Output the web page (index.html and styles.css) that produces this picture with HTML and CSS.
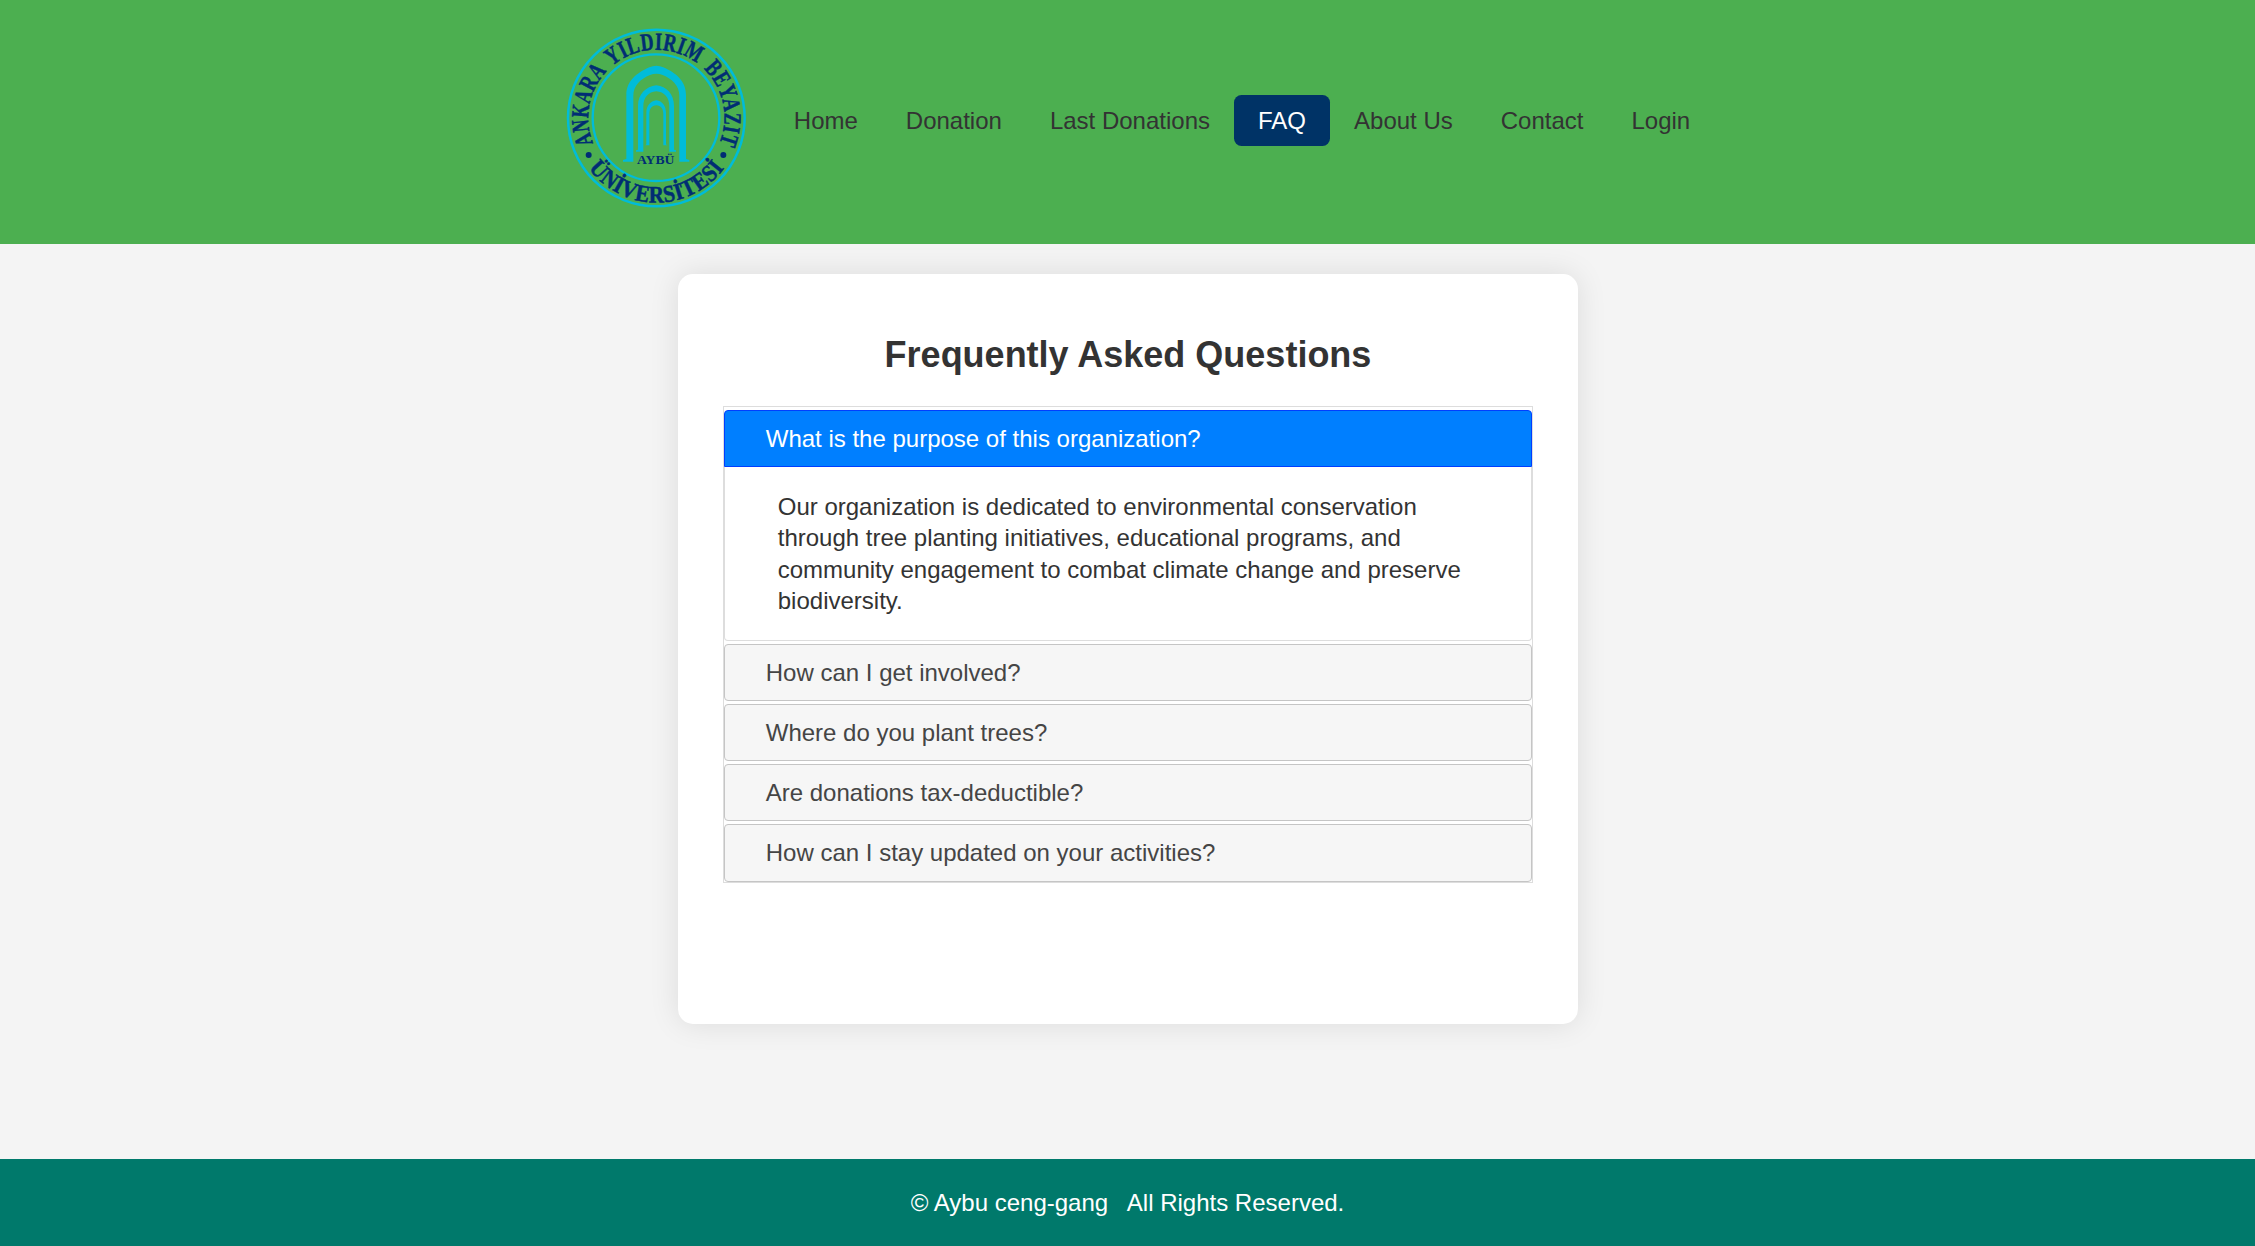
FILE: index.html
```html
<!DOCTYPE html>
<html lang="en">
<head>
<meta charset="utf-8">
<title>FAQ</title>
<link rel="stylesheet" href="styles.css">
</head>
<body>
<header class="site-header">
  <svg class="logo" viewBox="-27 0 687 660" role="img" aria-label="Ankara Yıldırım Beyazıt Üniversitesi">
    <defs>
      <path id="arc-top" d="M130 400A204 204 0 1 1 508 400"/>
      <path id="arc-bottom" d="M116 475A252 252 0 0 0 522 475"/>
    </defs>
    <g fill="none" stroke="#00bcd9">
      <circle cx="319" cy="324" r="265" stroke-width="7.5"/>
      <circle cx="318" cy="323" r="190" stroke-width="7"/>
    </g>
    <g fill="#00bcd9">
      <path d="M219 455V450L229 447V255C229 212 262 188 298 172Q319 162 340 172C376 188 408 212 408 255V447L418 450V455H388V258C388 226 366 207 338 195Q319 187 300 195C272 207 250 226 250 258V455Z"/>
      <path d="M258 425V421L264 419V287C264 253 288 229 319 226C350 229 372 253 372 287V419L378 421V425H358V290C358 262 343 246 319 244C295 246 280 262 280 290V425Z"/>
      <path d="M286 406L289 403V309C289 288 301 273 319 271C337 273 348 288 348 309V403L351 406H340V313C340 296 333 287 319 286C305 287 298 296 298 313V406Z"/>
    </g>
    <g class="logo-text">
      <text class="logo-ring"><textPath href="#arc-top" startOffset="0" textLength="234" lengthAdjust="spacingAndGlyphs">ANKARA</textPath></text>
      <text class="logo-ring"><textPath href="#arc-top" startOffset="254" textLength="278" lengthAdjust="spacingAndGlyphs">YILDIRIM</textPath></text>
      <text class="logo-ring"><textPath href="#arc-top" startOffset="555" textLength="245" lengthAdjust="spacingAndGlyphs">BEYAZIT</textPath></text>
      <text class="logo-ring logo-ring-bottom"><textPath href="#arc-bottom" textLength="475" lengthAdjust="spacingAndGlyphs">ÜNİVERSİTESİ</textPath></text>
      <text x="261" y="461" font-size="40" textLength="112" lengthAdjust="spacingAndGlyphs">AYBÜ</text>
      <circle cx="116" cy="435" r="9"/>
      <circle cx="520" cy="435" r="9"/>
    </g>
  </svg>
  <nav class="nav">
    <a>Home</a>
    <a>Donation</a>
    <a>Last Donations</a>
    <a class="active">FAQ</a>
    <a>About Us</a>
    <a>Contact</a>
    <a>Login</a>
  </nav>
</header>
<main class="main">
  <section class="card">
    <h1>Frequently Asked Questions</h1>
    <div class="accordion">
      <div class="question open">What is the purpose of this organization?</div>
      <div class="answer">Our organization is dedicated to environmental conservation through tree planting initiatives, educational programs, and community engagement to combat climate change and preserve biodiversity.</div>
      <div class="question">How can I get involved?</div>
      <div class="question">Where do you plant trees?</div>
      <div class="question">Are donations tax-deductible?</div>
      <div class="question">How can I stay updated on your activities?</div>
    </div>
  </section>
</main>
<footer class="site-footer">© Aybu ceng-gang &nbsp; All Rights Reserved.</footer>
</body>
</html>
```
FILE: styles.css
```css
* {
  box-sizing: border-box;
}

body {
  margin: 0;
  min-height: 1246px;
  display: flex;
  flex-direction: column;
  background: #f4f4f4;
  color: #333;
  font: 24px "Liberation Sans", Arial, sans-serif;
}

.site-header {
  display: flex;
  justify-content: center;
  height: 244px;
  padding-top: 10px;
  background: #4caf50;
}

.logo {
  width: 229px;
  height: 220px;
  flex: none;
}

.logo-text {
  fill: #002d74;
  font-family: "Liberation Serif", "Times New Roman", serif;
  font-weight: bold;
}

.logo-ring {
  font-size: 74px;
  letter-spacing: 2px;
  stroke: #002d74;
  stroke-width: 1.5px;
}

.logo-ring-bottom {
  font-size: 71px;
}

.nav {
  display: flex;
  align-items: center;
  height: 221px;
}

.nav a {
  padding: 12px 24px;
  border-radius: 7.5px;
  line-height: 27px;
  white-space: nowrap;
}

.nav .active {
  background: #003366;
  color: #fff;
}

.main {
  flex: 1;
  padding-top: 30px;
}

.card {
  width: 900px;
  height: 750px;
  margin: 0 auto;
  padding: 60px 45px 45px;
  border-radius: 15px;
  background: #fff;
  box-shadow: 0 0 30px rgba(0, 0, 0, 0.1);
}

h1 {
  margin: 0 0 30px;
  padding-left: 1px;
  font-size: 36px;
  line-height: 42px;
  text-align: center;
}

.accordion {
  height: 477px;
  border: 1px solid #ddd;
}

.question {
  height: 57px;
  margin-top: 3px;
  padding: 0 41.25px;
  border: 1px solid #c5c5c5;
  border-radius: 4px;
  background: #f6f6f6;
  color: #454545;
  line-height: 56px;
}

.question:last-child {
  height: 58px;
}

.question.open {
  border-color: #003eff;
  border-radius: 4px 4px 0 0;
  background: #007fff;
  color: #fff;
}

.answer {
  height: 174px;
  padding: 24.2px 53.25px;
  border: 1px solid #ddd;
  border-top: 0;
  border-radius: 0 0 4px 4px;
  line-height: 31.2px;
}

.site-footer {
  height: 87px;
  background: #00796b;
  color: #fff;
  line-height: 87px;
  text-align: center;
}
```
